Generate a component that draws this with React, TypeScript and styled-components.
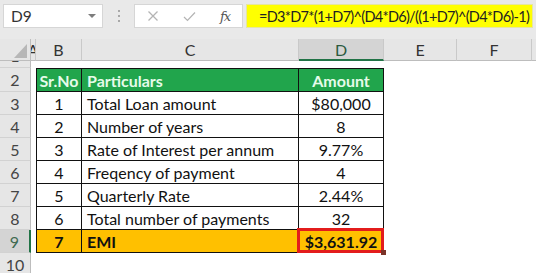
import React from "react";
import styled, { createGlobalStyle } from "styled-components";

const GlobalStyle = createGlobalStyle`
  html, body { margin: 0; padding: 0; background: #ffffff; }
  body { font-family: Lato, "Liberation Sans", sans-serif; overflow: hidden; }
  #root { width: 536px; height: 273px; overflow: hidden; }
`;

const COLS = "31px 5px 46px 217px 85px 73px 75px 1fr";

const Window = styled.div`
  display: flex;
  flex-direction: column;
  width: 536px;
  height: 273px;
  background: #ffffff;
  overflow: hidden;
`;

const TopBar = styled.div`
  display: flex;
  align-items: flex-start;
  height: 39px;
  flex: none;
  box-sizing: border-box;
  padding: 4px 3px 0 3px;
  background: #e9e9e9;
`;

const NameBox = styled.div`
  width: 100px;
  height: 24px;
  box-sizing: border-box;
  background: #ffffff;
  border: 1px solid #d6d6d6;
  display: flex;
  align-items: center;
  justify-content: space-between;
  padding: 0 6px 0 7px;
  font-size: 15.5px;
  color: #333333;
`;

const DropArrow = styled.span`
  width: 0;
  height: 0;
  border-left: 4px solid transparent;
  border-right: 4px solid transparent;
  border-top: 4px solid #7d7d7d;
`;

const Grip = styled.div`
  width: 31px;
  height: 24px;
  display: flex;
  flex-direction: column;
  align-items: center;
  justify-content: center;
  gap: 3px;
`;

const GripDot = styled.span`
  width: 2px;
  height: 2px;
  background: #a8a8a8;
`;

const FxButtons = styled.div`
  width: 109px;
  height: 24px;
  box-sizing: border-box;
  background: #ffffff;
  border: 1px solid #d6d6d6;
  display: grid;
  grid-template-columns: 36px 36px 36px;
  align-items: center;
  justify-items: center;
`;

const FxLabel = styled.span`
  font-family: "DejaVu Serif", "Liberation Serif", serif;
  font-style: italic;
  font-size: 13px;
  color: #555555;
  letter-spacing: -1px;
`;

const FormulaBox = styled.div`
  flex: 1;
  height: 24px;
  margin-left: 3px;
  box-sizing: border-box;
  background: #ffff00;
  border: 1px solid #e6e6a0;
  display: flex;
  align-items: center;
  padding-left: 12px;
  font-size: 14.5px;
  letter-spacing: -0.7px;
  color: #222222;
  white-space: nowrap;
  overflow: hidden;
`;

const Sheet = styled.div`
  display: flex;
  flex-direction: column;
  flex: 1;
  overflow: hidden;
`;

const SheetRow = styled.div<{ $h: number }>`
  display: grid;
  grid-template-columns: ${COLS};
  height: ${(p) => p.$h}px;
  flex: none;
`;

const Corner = styled.div`
  background: #e6e6e6;
  border-right: 1px solid #bdbdbd;
  border-bottom: 1px solid #bdbdbd;
  box-sizing: border-box;
  display: flex;
  align-items: flex-end;
  justify-content: flex-end;
  padding: 0 3px 2px 0;
`;

const CornerTriangle = styled.span`
  width: 0;
  height: 0;
  border-left: 13px solid transparent;
  border-bottom: 14px solid #b7b7b7;
`;

const ColHead = styled.div<{ $sel?: boolean; $last?: boolean }>`
  display: flex;
  align-items: center;
  justify-content: center;
  box-sizing: border-box;
  overflow: hidden;
  background: ${(p) => (p.$sel ? "#d4d4d4" : "#e6e6e6")};
  color: ${(p) => (p.$sel ? "#2b5a3e" : "#333333")};
  border-right: ${(p) => (p.$last ? "none" : "1px solid #c9c9c9")};
  border-bottom: ${(p) => (p.$sel ? "2px solid #217346" : "1px solid #bdbdbd")};
  font-size: 16px;
`;

const RowHead = styled.div<{ $sel?: boolean; $clip?: boolean }>`
  display: flex;
  align-items: ${(p) => (p.$clip ? "flex-end" : "center")};
  justify-content: center;
  box-sizing: border-box;
  overflow: hidden;
  background: ${(p) => (p.$sel ? "#d4d4d4" : "#e6e6e6")};
  color: ${(p) => (p.$sel ? "#3f6a50" : "#444444")};
  border-right: ${(p) => (p.$sel ? "2px solid #217346" : "1px solid #bdbdbd")};
  border-bottom: 1px solid #d2d2d2;
  font-size: 16px;
  line-height: 23px;
`;

const Blank = styled.div`
  background: #ffffff;
`;

type Variant = "head" | "body" | "total";

const Cell = styled.div<{
  $v: Variant;
  $align: "left" | "center";
  $first?: boolean;
  $top?: boolean;
}>`
  position: relative;
  display: flex;
  align-items: center;
  justify-content: ${(p) => (p.$align === "left" ? "flex-start" : "center")};
  box-sizing: border-box;
  padding: 0 5px;
  border-right: 1px solid #111111;
  border-bottom: 1px solid #111111;
  border-left: ${(p) => (p.$first ? "1px solid #111111" : "none")};
  border-top: ${(p) => (p.$top ? "1px solid #111111" : "none")};
  background: ${(p) =>
    p.$v === "head" ? "#21a54c" : p.$v === "total" ? "#ffc000" : "#ffffff"};
  color: ${(p) => (p.$v === "head" ? "#e6fbea" : "#111111")};
  font-weight: ${(p) => (p.$v === "body" ? 400 : 700)};
  font-size: 16px;
  white-space: nowrap;
`;

const Highlight = styled.span`
  position: absolute;
  left: -2px;
  right: -1px;
  top: -2px;
  bottom: -1px;
  border: 3px solid #e31c1c;
  pointer-events: none;
`;

const FillHandle = styled.span`
  position: absolute;
  right: -3px;
  bottom: -3px;
  width: 5px;
  height: 5px;
  background: #7a3328;
`;

type Row = { num: string; sr: string; label: string; amount: string; v: Variant };

const rows: Row[] = [
  { num: "2", sr: "Sr.No", label: "Particulars", amount: "Amount", v: "head" },
  { num: "3", sr: "1", label: "Total Loan amount", amount: "$80,000", v: "body" },
  { num: "4", sr: "2", label: "Number of years", amount: "8", v: "body" },
  { num: "5", sr: "3", label: "Rate of Interest per annum", amount: "9.77%", v: "body" },
  { num: "6", sr: "4", label: "Freqency of payment", amount: "4", v: "body" },
  { num: "7", sr: "5", label: "Quarterly Rate", amount: "2.44%", v: "body" },
  { num: "8", sr: "6", label: "Total number of payments", amount: "32", v: "body" },
  { num: "9", sr: "7", label: "EMI", amount: "$3,631.92", v: "total" },
];

const CrossIcon = () => (
  <svg width="12" height="12" viewBox="0 0 12 12">
    <path d="M1.5 1.5 L10.5 10.5 M10.5 1.5 L1.5 10.5" stroke="#b4b4b4" strokeWidth="1.3" fill="none" />
  </svg>
);

const CheckIcon = () => (
  <svg width="13" height="11" viewBox="0 0 13 11">
    <path d="M1 6 L4.5 9.5 L12 1.5" stroke="#b4b4b4" strokeWidth="1.2" fill="none" />
  </svg>
);

export default function App() {
  return (
    <Window>
      <GlobalStyle />
      <TopBar>
        <NameBox>
          <span>D9</span>
          <DropArrow />
        </NameBox>
        <Grip>
          <GripDot />
          <GripDot />
          <GripDot />
        </Grip>
        <FxButtons>
          <CrossIcon />
          <CheckIcon />
          <FxLabel>fx</FxLabel>
        </FxButtons>
        <FormulaBox>=D3*D7*(1+D7)^(D4*D6)/((1+D7)^(D4*D6)-1)</FormulaBox>
      </TopBar>
      <Sheet>
        <SheetRow $h={22}>
          <Corner>
            <CornerTriangle />
          </Corner>
          <ColHead>A</ColHead>
          <ColHead>B</ColHead>
          <ColHead>C</ColHead>
          <ColHead $sel>D</ColHead>
          <ColHead>E</ColHead>
          <ColHead>F</ColHead>
          <ColHead $last />
        </SheetRow>
        <SheetRow $h={7}>
          <RowHead $clip>1</RowHead>
          <Blank />
          <Blank />
          <Blank />
          <Blank />
          <Blank />
          <Blank />
          <Blank />
        </SheetRow>
        {rows.map((r, i) => (
          <SheetRow key={r.num} $h={i === 0 ? 24 : 23}>
            <RowHead $sel={r.v === "total"}>{r.num}</RowHead>
            <Blank />
            <Cell $v={r.v} $align="center" $first $top={i === 0}>
              {r.sr}
            </Cell>
            <Cell $v={r.v} $align="left" $top={i === 0}>
              {r.label}
            </Cell>
            <Cell $v={r.v} $align="center" $top={i === 0}>
              {r.amount}
              {r.v === "total" && (
                <>
                  <Highlight />
                  <FillHandle />
                </>
              )}
            </Cell>
            <Blank />
            <Blank />
            <Blank />
          </SheetRow>
        ))}
        <SheetRow $h={23}>
          <RowHead>10</RowHead>
          <Blank />
          <Blank />
          <Blank />
          <Blank />
          <Blank />
          <Blank />
          <Blank />
        </SheetRow>
      </Sheet>
    </Window>
  );
}
